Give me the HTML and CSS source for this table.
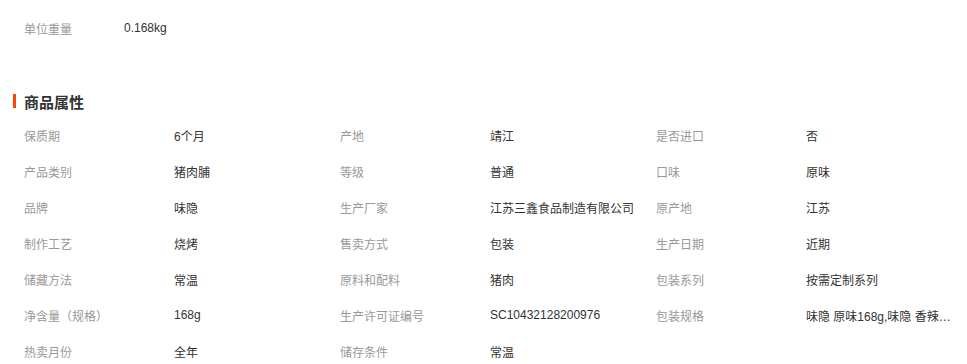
FILE: index.html
```html
<!DOCTYPE html>
<html lang="zh-CN">
<head>
<meta charset="utf-8">
<title>商品属性</title>
<link rel="stylesheet" href="styles.css">
</head>
<body>
<div class="top">
  <div class="top-row"><span class="top-label">单位重量</span><span class="top-value">0.168kg</span></div>
</div>
<h2 class="title">商品属性</h2>
<div class="attrs">
  <div class="attr"><span class="k">保质期</span><span class="v">6个月</span></div>
  <div class="attr"><span class="k">产地</span><span class="v">靖江</span></div>
  <div class="attr"><span class="k">是否进口</span><span class="v">否</span></div>
  <div class="attr"><span class="k">产品类别</span><span class="v">猪肉脯</span></div>
  <div class="attr"><span class="k">等级</span><span class="v">普通</span></div>
  <div class="attr"><span class="k">口味</span><span class="v">原味</span></div>
  <div class="attr"><span class="k">品牌</span><span class="v">味隐</span></div>
  <div class="attr"><span class="k">生产厂家</span><span class="v">江苏三鑫食品制造有限公司</span></div>
  <div class="attr"><span class="k">原产地</span><span class="v">江苏</span></div>
  <div class="attr"><span class="k">制作工艺</span><span class="v">烧烤</span></div>
  <div class="attr"><span class="k">售卖方式</span><span class="v">包装</span></div>
  <div class="attr"><span class="k">生产日期</span><span class="v">近期</span></div>
  <div class="attr"><span class="k">储藏方法</span><span class="v">常温</span></div>
  <div class="attr"><span class="k">原料和配料</span><span class="v">猪肉</span></div>
  <div class="attr"><span class="k">包装系列</span><span class="v">按需定制系列</span></div>
  <div class="attr"><span class="k">净含量（规格）</span><span class="v">168g</span></div>
  <div class="attr"><span class="k">生产许可证编号</span><span class="v">SC10432128200976</span></div>
  <div class="attr"><span class="k">包装规格</span><span class="v" title="味隐 原味168g,味隐 香辣168g">味隐 原味168g,味隐 香辣168g</span></div>
  <div class="attr"><span class="k">热卖月份</span><span class="v">全年</span></div>
  <div class="attr"><span class="k">储存条件</span><span class="v">常温</span></div>
</div>
</body>
</html>
```
FILE: styles.css
```css
html, body {
  margin: 0;
  padding: 0;
  background: #fff;
}
body {
  font-family: "Liberation Sans", "Noto Sans CJK SC", sans-serif;
  font-size: 12px;
  color: #333;
}
.top {
  padding: 10px 0 0 24px;
}
.top-row {
  display: flex;
  height: 36px;
  align-items: center;
}
.top-label {
  width: 100px;
  color: #999;
}
.top-value {
  color: #333;
}
.title {
  display: flex;
  align-items: center;
  margin: 43px 0 0 13px;
  height: 24px;
  font-size: 15px;
  font-weight: bold;
  color: #333;
}
.title::before {
  content: "";
  width: 3px;
  height: 14px;
  background: #ff4400;
  margin-right: 8px;
}
.attrs {
  margin: 4px 0 0 24px;
  display: grid;
  grid-template-columns: repeat(3, 316px);
}
.attr {
  display: flex;
  align-items: center;
  height: 36px;
  white-space: nowrap;
}
.k {
  width: 150px;
  flex: none;
  color: #999;
}
.v {
  color: #333;
  max-width: 145px;
  overflow: hidden;
  text-overflow: ellipsis;
}
```
